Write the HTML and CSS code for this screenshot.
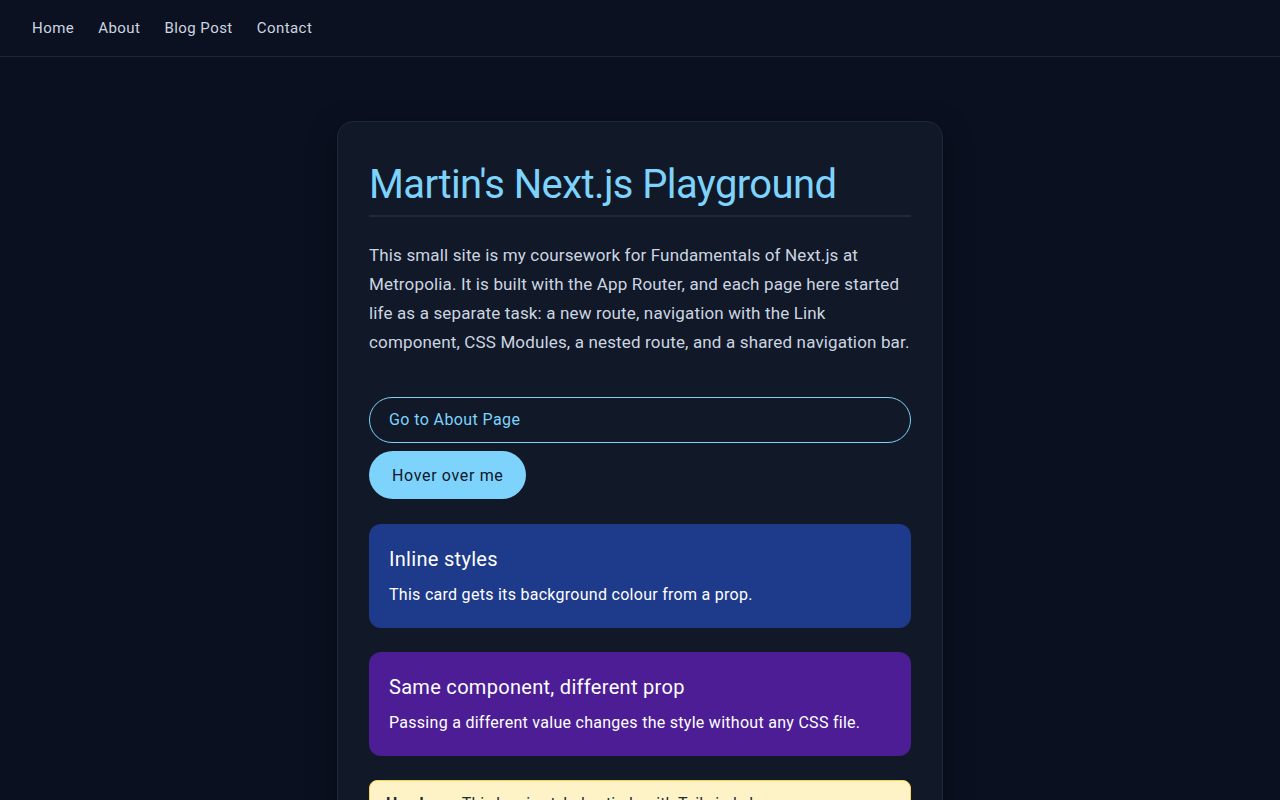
FILE: index.html
```html
<!DOCTYPE html>
<html lang="en">
<head>
<meta charset="utf-8">
<title>Martin's Next.js Playground</title>
<link rel="stylesheet" href="styles.css">
</head>
<body>
<nav class="nav">
  <a class="nav-link" href="#">Home</a>
  <a class="nav-link" href="#">About</a>
  <a class="nav-link" href="#">Blog Post</a>
  <a class="nav-link" href="#">Contact</a>
</nav>
<main class="main">
  <section class="card">
    <h1 class="title">Martin's Next.js Playground</h1>
    <p class="intro">This small site is my coursework for Fundamentals of Next.js at Metropolia. It is built with the App Router, and each page here started life as a separate task: a new route, navigation with the Link component, CSS Modules, a nested route, and a shared navigation bar.</p>
    <div class="actions">
      <a class="btn-outline" href="#">Go to About Page</a>
      <button class="btn-fill" type="button">Hover over me</button>
    </div>
    <div class="info info-blue">
      <h2 class="info-title">Inline styles</h2>
      <p class="info-text">This card gets its background colour from a prop.</p>
    </div>
    <div class="info info-purple">
      <h2 class="info-title">Same component, different prop</h2>
      <p class="info-text">Passing a different value changes the style without any CSS file.</p>
    </div>
    <div class="note">
      <p class="note-text"><strong>Heads up:</strong> This box is styled entirely with Tailwind classes.</p>
    </div>
  </section>
</main>
</body>
</html>
```
FILE: styles.css
```css
* { box-sizing: border-box; }
html, body { margin: 0; padding: 0; }
body {
  background: #0a1020;
  color: #cbd5e1;
  font-family: Roboto, "Liberation Sans", sans-serif;
}
.nav {
  display: flex;
  gap: 24px;
  height: 57px;
  align-items: center;
  padding: 0 32px;
  border-bottom: 1px solid #1e2636;
  background: #0b1120;
}
.nav-link {
  color: #cbd5e1;
  text-decoration: none;
  font-size: 15px;
  letter-spacing: 0.45px;
}
.main {
  display: flex;
  justify-content: center;
  padding-top: 64px;
}
.card {
  width: 606px;
  background: #111827;
  border: 1px solid #1f2937;
  border-radius: 16px;
  padding: 32px 31px;
  box-shadow: 0 10px 30px rgba(0,0,0,0.35);
}
.title {
  margin: 0;
  font-size: 40px;
  font-weight: 400;
  color: #7dd3fc;
  line-height: 61px;
  padding-bottom: 0;
  border-bottom: 2px solid #1e293b;
  letter-spacing: -0.6px;
}
.intro {
  margin: 24px 0 40px;
  font-size: 17px;
  line-height: 1.7;
  color: #cbd5e1;
  letter-spacing: 0.15px;
}
.actions {
  display: flex;
  flex-direction: column;
  align-items: flex-start;
  gap: 8px;
  padding-bottom: 1px;
}
.btn-outline {
  display: block;
  width: 100%;
  height: 46px;
  line-height: 44px;
  padding: 0 19px;
  border: 1px solid #7dd3fc;
  border-radius: 999px;
  color: #7dd3fc;
  text-decoration: none;
  font-size: 16px;
  letter-spacing: 0.4px;
}
.btn-fill {
  height: 48px;
  padding: 1px 23px 0;
  border: none;
  border-radius: 999px;
  background: #7dd3fc;
  color: #0f172a;
  font-family: inherit;
  font-size: 16px;
  letter-spacing: 0.65px;
}
.info {
  margin-top: 24px;
  border-radius: 12px;
  padding: 21px 20px;
  color: #ffffff;
}
.info-blue { background: #1e3a8a; }
.info-purple { background: #4c1d95; }
.info-title {
  margin: 0 0 10px;
  font-size: 20px;
  font-weight: 400;
  line-height: 28px;
  letter-spacing: 0.3px;
}
.info-text {
  margin: 0;
  font-size: 16px;
  line-height: 24px;
  letter-spacing: 0.28px;
}
.note {
  margin-top: 24px;
  background: #fef3c7;
  border: 1px solid #fcd34d;
  border-radius: 8px;
  padding: 11px 16px 14px;
  color: #1f2937;
}
.note-text {
  margin: 0;
  font-size: 16px;
  line-height: 24px;
}
```
